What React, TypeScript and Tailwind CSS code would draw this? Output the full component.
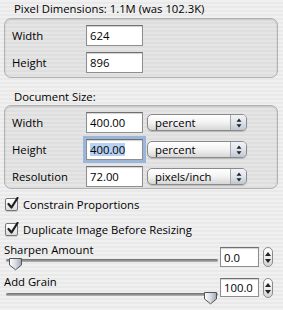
import React from "react";

const stripes =
  "bg-[repeating-linear-gradient(180deg,#f0f0f0_0px,#f0f0f0_2px,#e9e9e9_2px,#e9e9e9_4px)]";

function Field({ value, focused, className = "" }: { value: string; focused?: boolean; className?: string }) {
  return (
    <div
      className={`flex items-center border border-[#8e8e8e] border-t-[#6f6f6f] bg-white pl-[3px] shadow-[inset_0_1px_1px_rgba(0,0,0,0.18)] ${
        focused ? "ring-[3px] ring-[#9ab6da]" : ""
      } ${className}`}
    >
      <span className={focused ? "bg-[#b6d1f2] leading-[13px]" : "leading-[13px]"}>{value}</span>
    </div>
  );
}

function Popup({ label }: { label: string }) {
  return (
    <div className="ml-[4px] flex h-[17px] w-[100px] overflow-hidden rounded-[5px] border border-[#8a8a8a] bg-gradient-to-b from-white via-[#f3f3f3] to-[#d6d6d6] shadow-[0_1px_1px_rgba(0,0,0,0.18)]">
      <span className="flex-1 pl-[7px] leading-[15px]">{label}</span>
      <span className="flex w-[16px] items-center justify-center border-l border-[#a8a8a8] bg-gradient-to-b from-[#f1f4f8] via-[#dfe4eb] to-[#bfc7d2]">
        <svg width="6" height="10" viewBox="0 0 6 10">
          <path d="M3 0.5 L5.5 3.8 H0.5 Z" fill="#222" />
          <path d="M3 9.5 L5.5 6.2 H0.5 Z" fill="#222" />
        </svg>
      </span>
    </div>
  );
}

function Check({ label }: { label: string }) {
  return (
    <div className="flex h-[13px] items-center pl-[5px]">
      <span className="relative h-[13px] w-[13px] rounded-[2px] border border-[#777] bg-gradient-to-b from-white to-[#dcdcdc] shadow-[0_1px_1px_rgba(0,0,0,0.15)]">
        <svg className="absolute -top-[2px] left-[1px]" width="12" height="13" viewBox="0 0 12 13">
          <path d="M1.5 7 L4.5 10.5 L10.5 1" fill="none" stroke="#1e1e1e" strokeWidth="2.2" strokeLinecap="round" strokeLinejoin="round" />
        </svg>
      </span>
      <span className="ml-[5px] leading-[13px]">{label}</span>
    </div>
  );
}

function Stepper() {
  return (
    <div className="ml-[4px] flex h-[20px] w-[10px] flex-col items-center justify-center gap-[3px] rounded-full border border-[#8a8a8a] bg-gradient-to-b from-white via-[#ececec] to-[#d3d3d3]">
      <svg width="6" height="4" viewBox="0 0 6 4">
        <path d="M3 0 L6 4 H0 Z" fill="#222" />
      </svg>
      <svg width="6" height="4" viewBox="0 0 6 4">
        <path d="M3 4 L6 0 H0 Z" fill="#222" />
      </svg>
    </div>
  );
}

function Slider({ at }: { at: number }) {
  return (
    <div className="relative h-[15px] w-[212px]">
      <div className="absolute left-0 right-0 top-[3px] h-[3px] rounded-full bg-gradient-to-b from-[#6b6b6b] to-[#b9b9b9]" />
      <svg className="absolute top-[1px]" style={{ left: at }} width="15" height="14" viewBox="0 0 15 14">
        <defs>
          <linearGradient id={`t${at}`} x1="0" y1="0" x2="1" y2="0">
            <stop offset="0" stopColor="#fdfdfd" />
            <stop offset="0.5" stopColor="#d8dde3" />
            <stop offset="1" stopColor="#9ea7b1" />
          </linearGradient>
        </defs>
        <path d="M1.5 1.5 H13.5 V8 L7.5 12.8 L1.5 8 Z" fill={`url(#t${at})`} stroke="#555" strokeWidth="1" strokeLinejoin="round" />
      </svg>
    </div>
  );
}

export default function App() {
  return (
    <div className={`h-[310px] w-[283px] overflow-hidden ${stripes} font-['Open_Sans',sans-serif] text-[11.3px] text-black`}>
      <div className="h-[18px] pl-[14px] pt-[2px] leading-[13px]">Pixel Dimensions: 1.1M (was 102.3K)</div>

      <div className="ml-[4px] h-[60px] w-[274px] rounded-[7px] border border-[#b1b1b1] bg-black/[0.045] pt-[6px] shadow-[inset_0_1px_2px_rgba(0,0,0,0.12)]">
        <div className="flex flex-col gap-[6px]">
          <div className="flex h-[21px] items-center">
            <span className="w-[81px] pl-[7px] leading-[13px]">Width</span>
            <Field value="624" className="h-[21px] w-[57px]" />
          </div>
          <div className="flex h-[21px] items-center">
            <span className="w-[81px] pl-[7px] leading-[13px]">Height</span>
            <Field value="896" className="h-[21px] w-[57px]" />
          </div>
        </div>
      </div>

      <div className="mt-[12px] pl-[14px] leading-[13px]">Document Size:</div>

      <div className="ml-[4px] mt-[2px] h-[84px] w-[274px] rounded-[7px] border border-[#b1b1b1] bg-black/[0.045] pt-[6px] shadow-[inset_0_1px_2px_rgba(0,0,0,0.12)]">
        <div className="flex flex-col gap-[6px]">
          <div className="flex h-[21px] items-center">
            <span className="w-[81px] pl-[7px] leading-[13px]">Width</span>
            <Field value="400.00" className="h-[21px] w-[57px]" />
            <Popup label="percent" />
          </div>
          <div className="flex h-[21px] items-center">
            <span className="w-[81px] pl-[7px] leading-[13px]">Height</span>
            <Field value="400.00" focused className="h-[21px] w-[57px]" />
            <Popup label="percent" />
          </div>
          <div className="flex h-[21px] items-center">
            <span className="w-[81px] pl-[7px] leading-[13px]">Resolution</span>
            <Field value="72.00" className="h-[21px] w-[57px]" />
            <Popup label="pixels/inch" />
          </div>
        </div>
      </div>

      <div className="mt-[9px] flex flex-col gap-[12px]">
        <Check label="Constrain Proportions" />
        <Check label="Duplicate Image Before Resizing" />
      </div>

      <div className="mt-[7px] flex">
        <div className="w-[220px] pl-[4px]">
          <div className="leading-[13px]">Sharpen Amount</div>
          <div className="pl-[2px]">
            <Slider at={2} />
          </div>
        </div>
        <div className="mt-[4px] flex items-start">
          <Field value="0.0" className="h-[20px] w-[39px]" />
          <Stepper />
        </div>
      </div>

      <div className="mt-[4px] flex">
        <div className="w-[220px] pl-[4px]">
          <div className="leading-[13px]">Add Grain</div>
          <div className="pl-[2px] pt-[2px]">
            <Slider at={197} />
          </div>
        </div>
        <div className="mt-[3px] flex items-start">
          <Field value="100.0" className="h-[19px] w-[39px]" />
          <Stepper />
        </div>
      </div>
    </div>
  );
}
